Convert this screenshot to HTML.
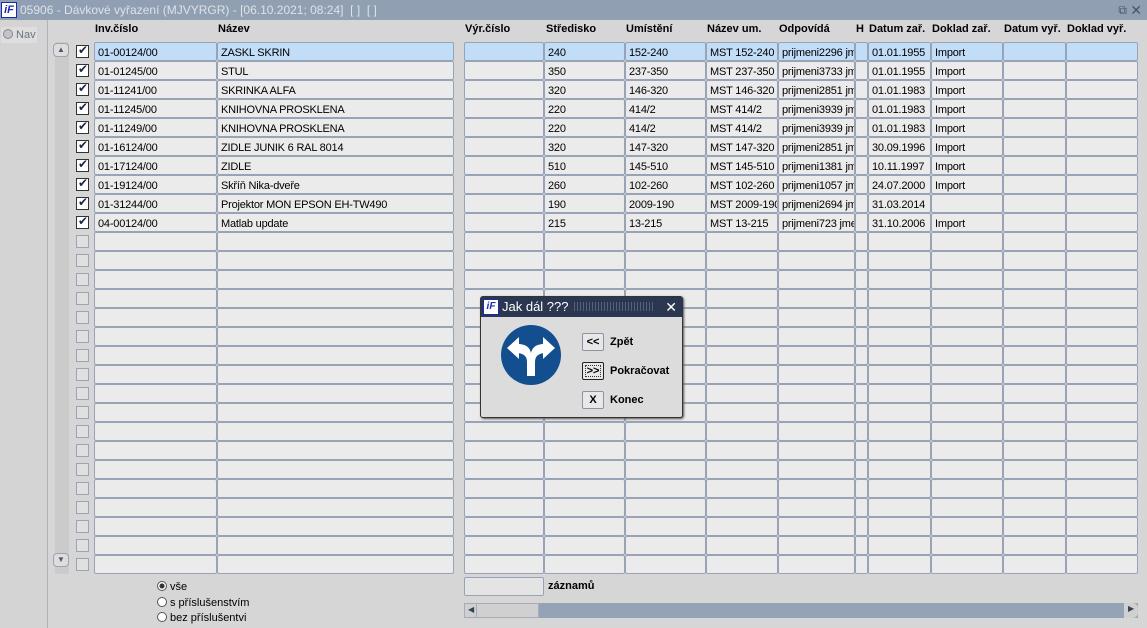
<!DOCTYPE html>
<html><head><meta charset="utf-8">
<style>
*{box-sizing:border-box;margin:0;padding:0}
body{width:1147px;height:628px;background:#d6d6d6;font-family:"Liberation Sans",sans-serif;font-size:11px;color:#000;position:relative;overflow:hidden}
.title{position:absolute;left:0;top:0;width:1147px;height:20px;background:#919fb2;color:#dde2ea;font-size:12px;line-height:20px;padding-left:20px}
.logo{position:absolute;background:#fff;border:1px solid #1a2ab0;color:#1a2ab0;font-weight:bold;font-style:italic;font-size:11px;text-align:center;line-height:14px}
.nav{position:absolute;left:0;top:20px;width:48px;height:608px;border-right:1px solid #aeb4bd;background:#d4d4d4}
.scol{position:absolute;left:55px;top:42px;width:14px;height:532px;background:#cbcbcb}
.hd{position:absolute;top:23px;font-weight:bold;font-size:11px;color:#000}
.row{position:absolute;left:0;height:19px;width:1147px}
.c{position:absolute;top:0;height:19px;border:1px solid #98a4b6;border-radius:2px;background:#ebebeb;padding-left:3px;padding-top:2px;line-height:16px;white-space:nowrap;overflow:hidden;font-size:11px;letter-spacing:-0.2px}
.sel .c{background:#c2ddf8}
.cb{position:absolute;left:76px;top:3px;width:13px;height:13px;border:1px solid #9aa4b4;background:#e0e0e0}
.cb.on{background:#fff;border-color:#333}
.cb.on::after{content:"✔";position:absolute;left:1px;top:-3px;font-size:12px;color:#1a2540}
.dlg{position:absolute;left:480px;top:296px;width:203px;height:122px;background:#dcdcdc;border:1px solid #333;border-radius:3px;box-shadow:1px 1px 2px #555}
.dt{height:20px;background:#2b3650;color:#fff;font-size:13px;line-height:20px;padding-left:21px;position:relative}
.btn{position:absolute;left:101px;width:22px;height:18px;border:1px solid #8a94a4;background:#e8e8e8;font-weight:bold;font-size:11px;text-align:center;line-height:16px;border-radius:2px}
.bl{position:absolute;left:129px;font-weight:bold;font-size:11px}
.rad{position:absolute;left:157px;font-size:11px}
.rad i{display:inline-block;width:10px;height:10px;border:1px solid #555;border-radius:50%;background:#fff;vertical-align:-1px;margin-right:3px}
</style></head><body>
<div class="title"><div class="logo" style="left:1px;top:2px;width:16px;height:16px">iF</div>05906 - Dávkové vyřazení (MJVYRGR) - [06.10.2021; 08:24]&nbsp; [ ]&nbsp; [ ]
<span style="position:absolute;right:20px;top:0;color:#4a5568;font-size:12px">⧉</span><span style="position:absolute;right:5px;top:0;color:#4a5568;font-size:14px">✕</span></div>
<div class="nav"><div style="position:absolute;left:1px;top:7px;width:36px;height:16px;background:#dedede;color:#6a7280;font-size:11px;padding:2px 0 0 2px;white-space:nowrap"><span style="display:inline-block;width:10px;height:10px;border:1px solid #888;border-radius:50%;background:#c0c4ca;vertical-align:-1px"></span> Nav</div></div>
<div class="scol"></div>
<div style="position:absolute;left:53px;top:43px;width:16px;height:14px;border:1px solid #9aa4b4;border-radius:4px;background:#ddd;font-size:8px;text-align:center;color:#556;line-height:12px">▲</div>
<div style="position:absolute;left:53px;top:553px;width:16px;height:14px;border:1px solid #9aa4b4;border-radius:4px;background:#ddd;font-size:8px;text-align:center;color:#556;line-height:12px">▼</div>
<div class="hd" style="left:95px">Inv.číslo</div>
<div class="hd" style="left:218px">Název</div>
<div class="hd" style="left:465px">Výr.číslo</div>
<div class="hd" style="left:546px">Středisko</div>
<div class="hd" style="left:626px">Umístění</div>
<div class="hd" style="left:707px">Název um.</div>
<div class="hd" style="left:779px">Odpovídá</div>
<div class="hd" style="left:856px">H</div>
<div class="hd" style="left:869px">Datum zař.</div>
<div class="hd" style="left:932px">Doklad zař.</div>
<div class="hd" style="left:1004px">Datum vyř.</div>
<div class="hd" style="left:1067px">Doklad vyř.</div>
<div id="grid"></div>
<div class="row sel" style="top:42px"><div class="cb on"></div><div class="c" style="left:94px;width:123px">01-00124/00</div><div class="c" style="left:217px;width:237px">ZASKL SKRIN</div><div class="c" style="left:464px;width:80px"></div><div class="c" style="left:544px;width:81px">240</div><div class="c" style="left:625px;width:81px">152-240</div><div class="c" style="left:706px;width:72px">MST 152-240</div><div class="c" style="left:778px;width:77px">prijmeni2296 jm</div><div class="c" style="left:855px;width:13px"></div><div class="c" style="left:868px;width:63px">01.01.1955</div><div class="c" style="left:931px;width:72px">Import</div><div class="c" style="left:1003px;width:63px"></div><div class="c" style="left:1066px;width:72px"></div></div>
<div class="row" style="top:61px"><div class="cb on"></div><div class="c" style="left:94px;width:123px">01-01245/00</div><div class="c" style="left:217px;width:237px">STUL</div><div class="c" style="left:464px;width:80px"></div><div class="c" style="left:544px;width:81px">350</div><div class="c" style="left:625px;width:81px">237-350</div><div class="c" style="left:706px;width:72px">MST 237-350</div><div class="c" style="left:778px;width:77px">prijmeni3733 jm</div><div class="c" style="left:855px;width:13px"></div><div class="c" style="left:868px;width:63px">01.01.1955</div><div class="c" style="left:931px;width:72px">Import</div><div class="c" style="left:1003px;width:63px"></div><div class="c" style="left:1066px;width:72px"></div></div>
<div class="row" style="top:80px"><div class="cb on"></div><div class="c" style="left:94px;width:123px">01-11241/00</div><div class="c" style="left:217px;width:237px">SKRINKA ALFA</div><div class="c" style="left:464px;width:80px"></div><div class="c" style="left:544px;width:81px">320</div><div class="c" style="left:625px;width:81px">146-320</div><div class="c" style="left:706px;width:72px">MST 146-320</div><div class="c" style="left:778px;width:77px">prijmeni2851 jm</div><div class="c" style="left:855px;width:13px"></div><div class="c" style="left:868px;width:63px">01.01.1983</div><div class="c" style="left:931px;width:72px">Import</div><div class="c" style="left:1003px;width:63px"></div><div class="c" style="left:1066px;width:72px"></div></div>
<div class="row" style="top:99px"><div class="cb on"></div><div class="c" style="left:94px;width:123px">01-11245/00</div><div class="c" style="left:217px;width:237px">KNIHOVNA PROSKLENA</div><div class="c" style="left:464px;width:80px"></div><div class="c" style="left:544px;width:81px">220</div><div class="c" style="left:625px;width:81px">414/2</div><div class="c" style="left:706px;width:72px">MST 414/2</div><div class="c" style="left:778px;width:77px">prijmeni3939 jm</div><div class="c" style="left:855px;width:13px"></div><div class="c" style="left:868px;width:63px">01.01.1983</div><div class="c" style="left:931px;width:72px">Import</div><div class="c" style="left:1003px;width:63px"></div><div class="c" style="left:1066px;width:72px"></div></div>
<div class="row" style="top:118px"><div class="cb on"></div><div class="c" style="left:94px;width:123px">01-11249/00</div><div class="c" style="left:217px;width:237px">KNIHOVNA PROSKLENA</div><div class="c" style="left:464px;width:80px"></div><div class="c" style="left:544px;width:81px">220</div><div class="c" style="left:625px;width:81px">414/2</div><div class="c" style="left:706px;width:72px">MST 414/2</div><div class="c" style="left:778px;width:77px">prijmeni3939 jm</div><div class="c" style="left:855px;width:13px"></div><div class="c" style="left:868px;width:63px">01.01.1983</div><div class="c" style="left:931px;width:72px">Import</div><div class="c" style="left:1003px;width:63px"></div><div class="c" style="left:1066px;width:72px"></div></div>
<div class="row" style="top:137px"><div class="cb on"></div><div class="c" style="left:94px;width:123px">01-16124/00</div><div class="c" style="left:217px;width:237px">ZIDLE JUNIK 6 RAL 8014</div><div class="c" style="left:464px;width:80px"></div><div class="c" style="left:544px;width:81px">320</div><div class="c" style="left:625px;width:81px">147-320</div><div class="c" style="left:706px;width:72px">MST 147-320</div><div class="c" style="left:778px;width:77px">prijmeni2851 jm</div><div class="c" style="left:855px;width:13px"></div><div class="c" style="left:868px;width:63px">30.09.1996</div><div class="c" style="left:931px;width:72px">Import</div><div class="c" style="left:1003px;width:63px"></div><div class="c" style="left:1066px;width:72px"></div></div>
<div class="row" style="top:156px"><div class="cb on"></div><div class="c" style="left:94px;width:123px">01-17124/00</div><div class="c" style="left:217px;width:237px">ZIDLE</div><div class="c" style="left:464px;width:80px"></div><div class="c" style="left:544px;width:81px">510</div><div class="c" style="left:625px;width:81px">145-510</div><div class="c" style="left:706px;width:72px">MST 145-510</div><div class="c" style="left:778px;width:77px">prijmeni1381 jm</div><div class="c" style="left:855px;width:13px"></div><div class="c" style="left:868px;width:63px">10.11.1997</div><div class="c" style="left:931px;width:72px">Import</div><div class="c" style="left:1003px;width:63px"></div><div class="c" style="left:1066px;width:72px"></div></div>
<div class="row" style="top:175px"><div class="cb on"></div><div class="c" style="left:94px;width:123px">01-19124/00</div><div class="c" style="left:217px;width:237px">Skříň Nika-dveře</div><div class="c" style="left:464px;width:80px"></div><div class="c" style="left:544px;width:81px">260</div><div class="c" style="left:625px;width:81px">102-260</div><div class="c" style="left:706px;width:72px">MST 102-260</div><div class="c" style="left:778px;width:77px">prijmeni1057 jm</div><div class="c" style="left:855px;width:13px"></div><div class="c" style="left:868px;width:63px">24.07.2000</div><div class="c" style="left:931px;width:72px">Import</div><div class="c" style="left:1003px;width:63px"></div><div class="c" style="left:1066px;width:72px"></div></div>
<div class="row" style="top:194px"><div class="cb on"></div><div class="c" style="left:94px;width:123px">01-31244/00</div><div class="c" style="left:217px;width:237px">Projektor MON EPSON EH-TW490</div><div class="c" style="left:464px;width:80px"></div><div class="c" style="left:544px;width:81px">190</div><div class="c" style="left:625px;width:81px">2009-190</div><div class="c" style="left:706px;width:72px">MST 2009-190</div><div class="c" style="left:778px;width:77px">prijmeni2694 jm</div><div class="c" style="left:855px;width:13px"></div><div class="c" style="left:868px;width:63px">31.03.2014</div><div class="c" style="left:931px;width:72px"></div><div class="c" style="left:1003px;width:63px"></div><div class="c" style="left:1066px;width:72px"></div></div>
<div class="row" style="top:213px"><div class="cb on"></div><div class="c" style="left:94px;width:123px">04-00124/00</div><div class="c" style="left:217px;width:237px">Matlab update</div><div class="c" style="left:464px;width:80px"></div><div class="c" style="left:544px;width:81px">215</div><div class="c" style="left:625px;width:81px">13-215</div><div class="c" style="left:706px;width:72px">MST 13-215</div><div class="c" style="left:778px;width:77px">prijmeni723 jme</div><div class="c" style="left:855px;width:13px"></div><div class="c" style="left:868px;width:63px">31.10.2006</div><div class="c" style="left:931px;width:72px">Import</div><div class="c" style="left:1003px;width:63px"></div><div class="c" style="left:1066px;width:72px"></div></div>
<script>
var cols=[[94,123],[217,237],[464,80],[544,81],[625,81],[706,72],[778,77],[855,13],[868,63],[931,72],[1003,63],[1066,72]];
var h='';for(var r=10;r<28;r++){h+='<div class="row" style="top:'+(42+r*19)+'px"><div class="cb"></div>';cols.forEach(function(c){h+='<div class="c" style="left:'+c[0]+'px;width:'+c[1]+'px"></div>'});h+='</div>';}
document.getElementById('grid').innerHTML=h;
</script>
<div class="rad" style="top:581px"><i style="background:radial-gradient(#333 40%,#fff 50%)"></i>vše</div>
<div class="rad" style="top:597px"><i></i>s příslušenstvím</div>
<div class="rad" style="top:612px"><i></i>bez příslušentvi</div>
<div style="position:absolute;left:464px;top:577px;width:80px;height:19px;border:1px solid #98a4b6;border-radius:2px;background:#e4e4e4"></div>
<div style="position:absolute;left:548px;top:580px;font-weight:bold">záznamů</div>
<div style="position:absolute;left:464px;top:603px;width:674px;height:15px;background:#94a3b6"></div>
<div style="position:absolute;left:464px;top:603px;width:75px;height:15px;background:#d0d0d0;border:1px solid #aab"><span style="position:absolute;left:0;top:0;width:12px;height:13px;border-right:1px solid #aab;border-radius:4px 0 0 4px"></span><span style="font-size:8px;color:#345;position:absolute;left:3px;top:1px">◀</span></div>
<div style="position:absolute;left:1124px;top:603px;width:14px;height:15px;background:#d0d0d0;border-radius:0 5px 5px 0"><span style="font-size:8px;color:#345;position:absolute;left:4px;top:1px">▶</span></div>
<div class="dlg">
<div class="dt"><div class="logo" style="left:2px;top:2px;width:16px;height:16px;font-size:10px">iF</div>Jak dál ???
<span style="position:absolute;left:93px;top:5px;width:80px;height:9px;background:repeating-linear-gradient(90deg,#55607a 0 1px,transparent 1px 3px)"></span>
<span style="position:absolute;right:5px;top:0;font-size:14px">✕</span></div>
<svg style="position:absolute;left:19px;top:27px" width="62" height="62" viewBox="0 0 62 62"><circle cx="31" cy="31" r="30" fill="#134f8f"/><g fill="#fff"><path d="M27 52 L27 38 Q27 30 18 29 L18 20 Q29 20 31 29 Q33 20 44 20 L44 29 Q35 30 35 38 L35 52 Z"/><polygon points="7,24 19,13 19,35"/><polygon points="55,24 43,13 43,35"/></g></svg>
<div class="btn" style="top:36px">&lt;&lt;</div><div class="bl" style="top:39px">Zpět</div>
<div class="btn" style="top:65px;border:1px solid #222;outline:1px dotted #333;outline-offset:-4px">&gt;&gt;</div><div class="bl" style="top:68px">Pokračovat</div>
<div class="btn" style="top:94px">X</div><div class="bl" style="top:97px">Konec</div>
</div>
</body></html>
